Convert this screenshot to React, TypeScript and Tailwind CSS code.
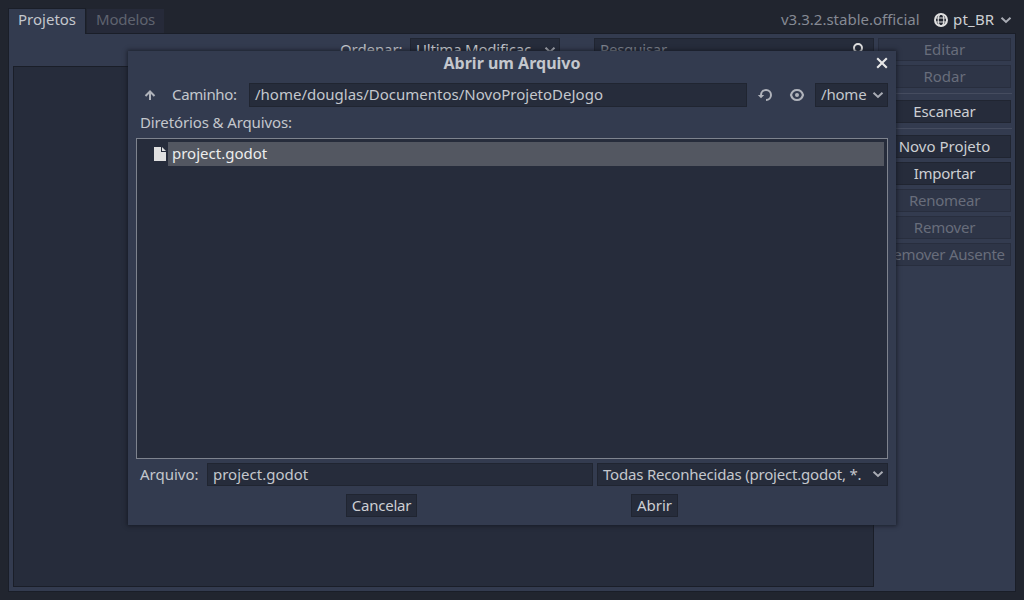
import React from "react";

const Chevron = ({ className = "" }: { className?: string }) => (
  <svg className={`h-3 w-3 shrink-0 ${className}`} viewBox="0 0 12 12" fill="none" stroke="#a9acb4" strokeWidth="2">
    <path d="M1.500 3.800 6 8l4.500-4.200" />
  </svg>
);

type BtnProps = { children: React.ReactNode; off?: boolean; className?: string };

const Btn = ({ children, off, className = "" }: BtnProps) => (
  <button
    className={`flex h-[23px] shrink-0 items-center justify-center border pb-px ${
      off ? "border-[#282e3e] bg-[#2e3547] text-[#686d7b]" : "border-[#202531] bg-[#262c3b] text-[#cdcfd3]"
    } ${className}`}
  >
    {children}
  </button>
);

const field = "flex shrink-0 items-center border border-[#202531] bg-[#262c3b] px-[5px] pb-[2px]";

function Background() {
  return (
    <>
      <header className="flex h-[25px] shrink-0">
        <div className="relative z-10 h-[26px] w-[78px] border border-b-0 border-[#1a1e28] bg-[#333b4f] pl-[9px] leading-[20px]">
          <span>Projetos</span>
        </div>
        <div className="ml-px h-[24px] w-[77px] translate-y-px bg-[#262a39] pl-[9px] leading-[20px] text-[#5f636f]">
          <span className="tracking-[-0.2px]">Modelos</span>
        </div>
        <div className="ml-auto flex h-[22px] items-center pr-1">
          <span className="w-[138px] text-[#868a94]">v3.3.2.stable.official</span>
          <svg className="ml-[15px] mt-[2px] h-[14px] w-[14px]" viewBox="0 0 14 14" fill="none" stroke="#e0e0e0" strokeWidth="1.2">
            <circle cx="7" cy="7" r="6" strokeWidth="2" />
            <ellipse cx="7" cy="7" rx="2.800" ry="6" />
            <path d="M1 5h12M1 9h12" strokeWidth="1.1" />
          </svg>
          <span className="ml-[5px] w-[42px] text-[#cdcfd3] tracking-[0.2px]">pt_BR</span>
          <Chevron className="ml-[5px] mt-[2px]" />
        </div>
      </header>
      <main className="flex h-[559px] shrink-0 gap-1 border border-[#1a1e28] bg-[#333b4f] p-1">
        <section className="flex w-[861px] shrink-0 flex-col">
          <div className="flex h-[23px] shrink-0 items-center pl-[327px]">
            <span className="w-[70px] pb-[2px] tracking-[-0.1px]">Ordenar:</span>
            <div className={`${field} h-[23px] w-[150px] justify-between pr-[3px]`}>
              <span className="w-[117px] overflow-hidden whitespace-nowrap tracking-[-0.2px]">Ultima Modificaç</span>
              <Chevron className="mt-[2px]" />
            </div>
            <div className={`${field} ml-[34px] h-[23px] w-[280px] justify-between text-[#7b808b]`}>
              <span className="tracking-[-0.2px]">Pesquisar</span>
              <svg className="mr-[3px] h-4 w-4" viewBox="0 0 16 16" fill="none" stroke="#e0e0e0" strokeWidth="2">
                <circle cx="9" cy="7" r="4" />
                <path d="m6 10-4 4" />
              </svg>
            </div>
          </div>
          <div className="mt-[5px] h-[521px] border border-[#1a1e28] bg-[#262c3b]" />
        </section>
        <aside className="flex w-[133px] shrink-0 flex-col gap-1">
          <Btn off>Editar</Btn>
          <Btn off>Rodar</Btn>
          <hr className="-mr-px mt-px mb-[2px] border-[#454c5f]" />
          <Btn className="tracking-[-0.15px]">Escanear</Btn>
          <hr className="-mr-px mt-px mb-[2px] border-[#454c5f]" />
          <Btn>Novo Projeto</Btn>
          <Btn className="tracking-[-0.25px]">Importar</Btn>
          <Btn off className="tracking-[-0.25px]">Renomear</Btn>
          <Btn off className="tracking-[-0.2px]">Remover</Btn>
          <Btn off className="whitespace-nowrap tracking-[-0.25px]">Remover Ausente</Btn>
        </aside>
      </main>
    </>
  );
}

function FileDialog() {
  return (
    <div className="absolute left-[128px] top-[51px] z-20 flex h-[474px] w-[768px] flex-col bg-[#333b4f] px-2 shadow-[0_0_4px_1px_rgba(15,18,26,0.65)]">
      <div className="flex h-[32px] items-start">
        <h1 className="flex-1 pl-[12px] text-center text-[16px] font-bold leading-[24px]">Abrir um Arquivo</h1>
        <svg className="mt-[6px] h-3 w-3" viewBox="0 0 12 12" stroke="#e8e8e8" strokeWidth="2.1">
          <path d="m1.200 1.200 9.600 9.600m0-9.600-9.600 9.600" />
        </svg>
      </div>
      <div className="flex h-6 shrink-0 items-center">
        <svg className="mb-px ml-2 h-3 w-3" viewBox="0 0 12 12" fill="none" stroke="#b0b3bb" strokeWidth="2">
          <path d="M6 11V3M1.500 7 6 2.500 10.500 7" />
        </svg>
        <span className="ml-4 w-[77px] pb-[2px] tracking-[-0.35px]">Caminho:</span>
        <div className={`${field} h-6 w-[498px]`}>
          <span>/home/douglas/Documentos/NovoProjetoDeJogo</span>
        </div>
        <svg className="ml-[10px] h-4 w-4" viewBox="0 0 16 16" fill="none" stroke="#b0b3bb" strokeWidth="2">
          <path d="M4 9V8a5 5 0 1 1 5 5" />
          <path d="M.8 8h6.400L4 11.300z" fill="#b0b3bb" stroke="none" />
        </svg>
        <svg className="ml-[16px] h-4 w-4" viewBox="0 0 16 16" fill="none" stroke="#b0b3bb" strokeWidth="2.2">
          <path d="M2 8c1-3.500 3.300-5 6-5s5 1.500 6 5c-1 3.500-3.300 5-6 5s-5-1.500-6-5z" />
          <circle cx="8" cy="8" r="2" fill="#b0b3bb" stroke="none" />
        </svg>
        <div className={`${field} ml-auto h-6 w-[73px] justify-between pr-[3px]`}>
          <span className="tracking-[-0.2px]">/home</span>
          <Chevron className="mt-[2px]" />
        </div>
      </div>
      <div className="h-[31px] shrink-0 pl-1 leading-[30px] tracking-[-0.12px]">Diretórios &amp; Arquivos:</div>
      <div className="h-[321px] shrink-0 border border-[#7e838e] bg-[#262c3b] p-[3px]">
        <div className="flex h-6 items-center pl-[14px]">
          <svg className="h-[14px] w-[12px]" viewBox="0 0 12 14" fill="#e0e0e0">
            <path d="M0 0h7v5h5v9H0zM8 0l4 4H8z" />
          </svg>
          <div className="ml-[2px] flex h-6 flex-1 items-center bg-[#535761] pb-[2px] pl-1 text-[#eceded]">project.godot</div>
        </div>
      </div>
      <div className="mt-1 flex h-[23px] shrink-0 items-center pl-1">
        <span className="w-[67px] pb-[2px]">Arquivo:</span>
        <div className={`${field} h-[23px] w-[386px]`}>
          <span>project.godot</span>
        </div>
        <div className={`${field} ml-1 h-[23px] w-[291px] justify-between pr-[3px]`}>
          <span className="whitespace-nowrap tracking-[-0.2px]">Todas Reconhecidas (project.godot, *.</span>
          <Chevron className="mt-px" />
        </div>
      </div>
      <div className="mt-2 flex pl-[210px]">
        <Btn className="w-[71px] tracking-[-0.25px]">Cancelar</Btn>
        <Btn className="ml-[214px] w-[47px]">Abrir</Btn>
      </div>
    </div>
  );
}

export default function App() {
  return (
    <div className="relative flex h-[600px] w-[1024px] flex-col overflow-hidden bg-[#21252f] px-2 pt-2 font-['Noto_Sans',sans-serif] text-[15px] leading-[22px] text-[#c4c7cd]">
      <Background />
      <FileDialog />
    </div>
  );
}
